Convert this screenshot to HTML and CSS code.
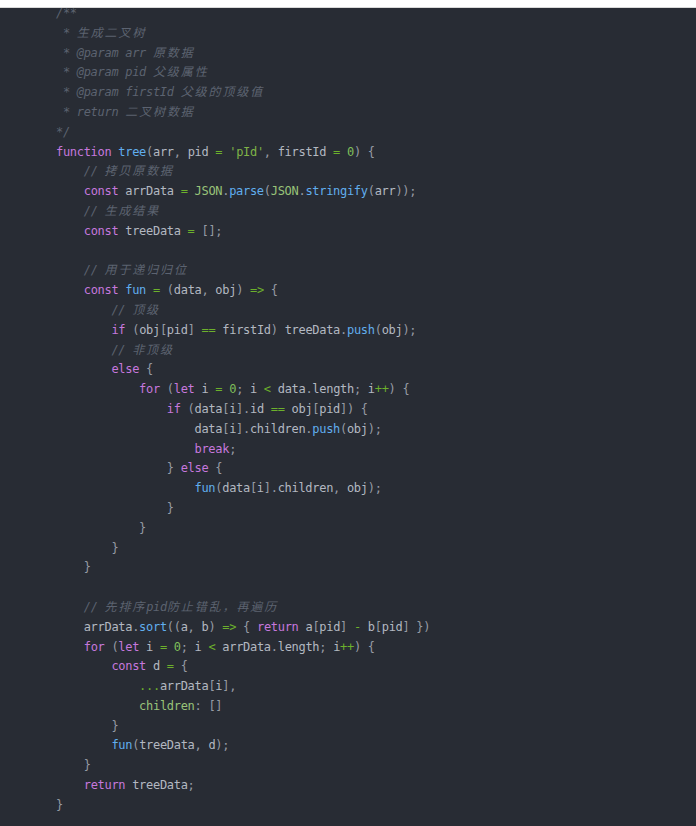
FILE: index.html
```html
<!DOCTYPE html>
<html lang="zh">
<head>
<meta charset="utf-8">
<title>二叉树</title>
<link rel="stylesheet" href="styles.css">
</head>
<body>
<div class="topbar"></div>
<div class="codebox">
<pre class="code"><span class="c">/**
 * <span class="zh">生成二叉树</span>
 * @param arr <span class="zh">原数据</span>
 * @param pid <span class="zh">父级属性</span>
 * @param firstId <span class="zh">父级的顶级值</span>
 * return <span class="zh">二叉树数据</span>
*/</span>
<span class="k">function</span> <span class="f">tree</span><span class="p">(</span>arr<span class="p">,</span> pid <span class="o">=</span> <span class="s">'pId'</span><span class="p">,</span> firstId <span class="o">=</span> <span class="n">0</span><span class="p">) {</span>
    <span class="c">// <span class="zh">拷贝原数据</span></span>
    <span class="k">const</span> arrData <span class="o">=</span> <span class="b">JSON</span><span class="p">.</span><span class="f">parse</span><span class="p">(</span><span class="b">JSON</span><span class="p">.</span><span class="f">stringify</span><span class="p">(</span>arr<span class="p">));</span>
    <span class="c">// <span class="zh">生成结果</span></span>
    <span class="k">const</span> treeData <span class="o">=</span> <span class="p">[];</span>

    <span class="c">// <span class="zh">用于递归归位</span></span>
    <span class="k">const</span> <span class="f">fun</span> <span class="o">=</span> <span class="p">(</span>data<span class="p">,</span> obj<span class="p">)</span> <span class="o">=&gt;</span> <span class="p">{</span>
        <span class="c">// <span class="zh">顶级</span></span>
        <span class="k">if</span> <span class="p">(</span>obj<span class="p">[</span>pid<span class="p">]</span> <span class="o">==</span> firstId<span class="p">)</span> treeData<span class="p">.</span><span class="f">push</span><span class="p">(</span>obj<span class="p">);</span>
        <span class="c">// <span class="zh">非顶级</span></span>
        <span class="k">else</span> <span class="p">{</span>
            <span class="k">for</span> <span class="p">(</span><span class="k">let</span> i <span class="o">=</span> <span class="n">0</span><span class="p">;</span> i <span class="o">&lt;</span> data<span class="p">.</span>length<span class="p">;</span> i<span class="o">++</span><span class="p">) {</span>
                <span class="k">if</span> <span class="p">(</span>data<span class="p">[</span>i<span class="p">].</span>id <span class="o">==</span> obj<span class="p">[</span>pid<span class="p">]) {</span>
                    data<span class="p">[</span>i<span class="p">].</span>children<span class="p">.</span><span class="f">push</span><span class="p">(</span>obj<span class="p">);</span>
                    <span class="k">break</span><span class="p">;</span>
                <span class="p">}</span> <span class="k">else</span> <span class="p">{</span>
                    <span class="f">fun</span><span class="p">(</span>data<span class="p">[</span>i<span class="p">].</span>children<span class="p">,</span> obj<span class="p">);</span>
                <span class="p">}</span>
            <span class="p">}</span>
        <span class="p">}</span>
    <span class="p">}</span>

    <span class="c">// <span class="zh">先排序</span>pid<span class="zh">防止错乱，再遍历</span></span>
    arrData<span class="p">.</span><span class="f">sort</span><span class="p">((</span>a<span class="p">,</span> b<span class="p">)</span> <span class="o">=&gt;</span> <span class="p">{</span> <span class="k">return</span> a<span class="p">[</span>pid<span class="p">]</span> <span class="o">-</span> b<span class="p">[</span>pid<span class="p">] })</span>
    <span class="k">for</span> <span class="p">(</span><span class="k">let</span> i <span class="o">=</span> <span class="n">0</span><span class="p">;</span> i <span class="o">&lt;</span> arrData<span class="p">.</span>length<span class="p">;</span> i<span class="o">++</span><span class="p">) {</span>
        <span class="k">const</span> d <span class="o">=</span> <span class="p">{</span>
            <span class="o">...</span>arrData<span class="p">[</span>i<span class="p">],</span>
            <span class="a">children</span><span class="p">:</span> <span class="p">[]</span>
        <span class="p">}</span>
        <span class="f">fun</span><span class="p">(</span>treeData<span class="p">,</span> d<span class="p">);</span>
    <span class="p">}</span>
    <span class="k">return</span> treeData<span class="p">;</span>
<span class="p">}</span></pre>
</div>
</body>
</html>
```

FILE: styles.css
```css
html, body {
  margin: 0;
  padding: 0;
  background: #ffffff;
}

.topbar {
  height: 7px;
  background: #ffffff;
  border-bottom: 1px solid #d9d9d9;
}

.codebox {
  background: #282c34;
  height: 818px;
  overflow: hidden;
}

.code {
  margin: -4px 0 0 0;
  padding: 0 0 0 56px;
  font-family: "DejaVu Sans Mono", "Liberation Mono", "Noto Sans CJK SC", monospace;
  font-size: 12px;
  letter-spacing: -0.3px;
  line-height: 19.8px;
  color: #b3b8c1;
  white-space: pre;
}

.zh {
  font-family: "Noto Sans CJK SC", sans-serif;
  font-size: 12px;
  line-height: 1;
  letter-spacing: 1.9px;
}

.c {
  color: #5c6370;
  font-style: italic;
}

.k { color: #c678dd; }
.f { color: #61aeee; }
.s { color: #7fb347; }
.o { color: #6cb02c; }
.n { color: #7fbf5a; }
.b { color: #98c379; }
.a { color: #98c379; }
.p { color: #969ba4; }
```
